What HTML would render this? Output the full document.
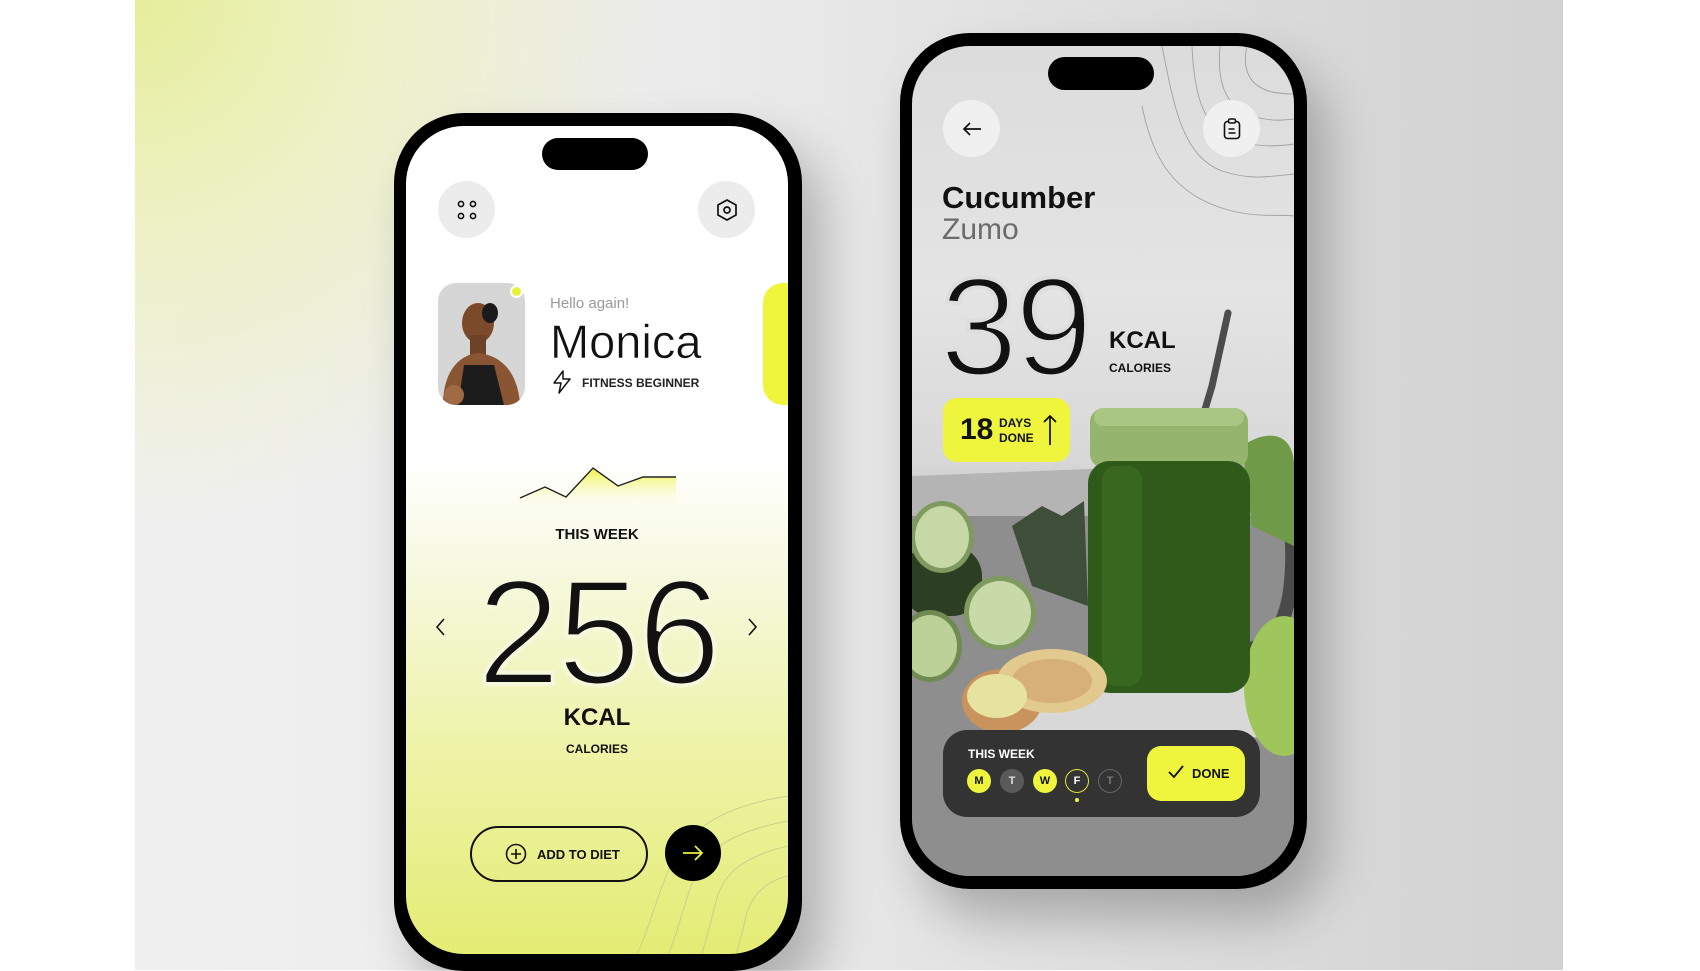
<!DOCTYPE html>
<html><head><meta charset="utf-8">
<style>
*{margin:0;padding:0;box-sizing:border-box}
body{width:1700px;height:970px;overflow:hidden;background:#fff;position:relative;font-family:"Liberation Sans",sans-serif;color:#111}
.a{position:absolute}
#bg{left:135px;top:0;width:1428px;height:970px;background:radial-gradient(ellipse 700px 700px at 0 0,#e6ee9a 0%,#eef1c8 35%,rgba(240,240,240,0) 75%),linear-gradient(90deg,#f0f0f0 0%,#ebebeb 40%,#dcdcdc 75%,#d2d2d2 100%)}
.phone{background:#000;border-radius:70px;box-shadow:20px 30px 50px rgba(0,0,0,.25)}
.scr{overflow:hidden;border-radius:58px}
.circ{border-radius:50%;display:flex;align-items:center;justify-content:center}
.b{font-weight:bold}
</style></head><body>
<div id="bg" class="a"></div>

<!-- LEFT PHONE -->
<div class="a phone" style="left:394px;top:113px;width:408px;height:858px"></div>
<div class="a scr" style="left:406px;top:126px;width:382px;height:828px;background:linear-gradient(180deg,#fff 0%,#fff 40%,#f6f8dc 55%,#eef3a8 75%,#e4ec74 100%)">
  <svg class="a" style="left:200px;top:660px" width="182" height="170" viewBox="0 0 182 170" fill="none" stroke="#c9cf8a" stroke-width="1">
    <path d="M182 10 C120 20 80 40 60 90 C45 130 40 150 30 170"/>
    <path d="M182 35 C130 45 100 60 85 100 C75 130 70 150 62 170"/>
    <path d="M182 60 C140 70 118 85 110 115 C104 140 100 155 95 170"/>
    <path d="M182 90 C160 95 145 110 140 130 C136 150 132 160 130 170"/>
  </svg>
</div>
<div class="a" style="left:542px;top:138px;width:106px;height:32px;background:#000;border-radius:16px"></div>
<div class="a circ" style="left:438px;top:181px;width:57px;height:57px;background:#ececec">
  <svg width="22" height="22" viewBox="0 0 22 22" fill="none" stroke="#111" stroke-width="1.6"><circle cx="5" cy="5" r="2.6"/><circle cx="17" cy="5" r="2.6"/><circle cx="5" cy="17" r="2.6"/><circle cx="17" cy="17" r="2.6"/></svg>
</div>
<div class="a circ" style="left:698px;top:181px;width:57px;height:57px;background:#ececec">
  <svg width="24" height="24" viewBox="0 0 24 24" fill="none" stroke="#111" stroke-width="1.7"><path d="M12 2 L21 7 L21 17 L12 22 L3 17 L3 7 Z"/><circle cx="12" cy="12" r="3"/></svg>
</div>
<!-- avatar -->
<div class="a" style="left:438px;top:283px;width:87px;height:122px;border-radius:18px;background:#d6d6d6;overflow:hidden">
  <svg width="87" height="122" viewBox="0 0 87 122">
    <ellipse cx="40" cy="40" rx="16" ry="20" fill="#7a4a2a"/>
    <ellipse cx="52" cy="30" rx="8" ry="10" fill="#1a1a1a"/>
    <rect x="32" y="52" width="16" height="20" fill="#6e4226"/>
    <path d="M5 122 C5 90 20 72 40 70 C62 72 80 88 82 122 Z" fill="#8a5532"/>
    <path d="M20 122 L26 82 L56 82 L66 122 Z" fill="#1c1c1c"/>
    <ellipse cx="16" cy="112" rx="10" ry="10" fill="#a06a44"/>
  </svg>
</div>
<div class="a" style="left:510px;top:285px;width:13px;height:13px;border-radius:50%;background:#e9f23a;border:2.5px solid #fff"></div>
<div class="a" style="left:550px;top:295px;font-size:15px;color:#9a9a9a">Hello again!</div>
<div class="a" style="left:550px;top:315px;font-size:47px;line-height:54px;color:#111;-webkit-text-stroke:0.6px #fff">Monica</div>
<svg class="a" style="left:552px;top:370px" width="20" height="24" viewBox="0 0 20 24" fill="none" stroke="#111" stroke-width="1.5" stroke-linejoin="round"><path d="M11 1 L2 13 L9 13 L7 23 L18 9 L11 9 Z"/></svg>
<div class="a b" style="left:582px;top:376px;font-size:12px;color:#222">FITNESS BEGINNER</div>
<div class="a" style="left:763px;top:283px;width:25px;height:122px;background:#eef53c;border-radius:20px 0 0 20px"></div>
<!-- chart -->
<svg class="a" style="left:518px;top:460px" width="160" height="50" viewBox="0 0 160 50">
  <defs><linearGradient id="g1" x1="0" y1="0" x2="0" y2="1"><stop offset="0" stop-color="#eef23c"/><stop offset="1" stop-color="#fff" stop-opacity="0"/></linearGradient></defs>
  <path d="M2 38 L27 27 L48 37 L75 8 L100 26 L125 17 L158 17 L158 50 L2 50 Z" fill="url(#g1)"/>
  <path d="M2 38 L27 27 L48 37 L75 8 L100 26 L125 17 L158 17" fill="none" stroke="#222" stroke-width="1.4"/>
</svg>
<div class="a b" style="left:497px;top:526px;width:200px;text-align:center;font-size:15px">THIS WEEK</div>
<div class="a" style="left:430px;top:557px;width:335px;text-align:center;font-size:150px;line-height:150px;letter-spacing:-3px;color:#111;-webkit-text-stroke:4px #f6f8dc;paint-order:normal">256</div>
<svg class="a" style="left:435px;top:617px" width="12" height="20" viewBox="0 0 12 20" fill="none" stroke="#111" stroke-width="1.6"><path d="M9 2 L2 10 L9 18"/></svg>
<svg class="a" style="left:746px;top:617px" width="12" height="20" viewBox="0 0 12 20" fill="none" stroke="#111" stroke-width="1.6"><path d="M3 2 L10 10 L3 18"/></svg>
<div class="a b" style="left:497px;top:704px;width:200px;text-align:center;font-size:24px">KCAL</div>
<div class="a b" style="left:497px;top:742px;width:200px;text-align:center;font-size:12px">CALORIES</div>
<div class="a" style="left:470px;top:826px;width:178px;height:56px;border:2.5px solid #111;border-radius:28px"></div>
<svg class="a" style="left:505px;top:843px" width="22" height="22" viewBox="0 0 22 22" fill="none" stroke="#111" stroke-width="1.6"><circle cx="11" cy="11" r="9.5"/><path d="M11 6v10M6 11h10"/></svg>
<div class="a b" style="left:537px;top:847px;font-size:13px">ADD TO DIET</div>
<div class="a circ" style="left:665px;top:825px;width:56px;height:56px;background:#000">
  <svg width="22" height="16" viewBox="0 0 22 16" fill="none" stroke="#e9f23a" stroke-width="1.8"><path d="M1 8h19M13 1l7 7-7 7"/></svg>
</div>

<!-- RIGHT PHONE -->
<div class="a phone" style="left:900px;top:33px;width:407px;height:856px"></div>
<div class="a scr" style="left:912px;top:46px;width:382px;height:830px;background:linear-gradient(180deg,#dcdcdc 0%,#e4e4e4 30%,#d8d8d8 50%,#bdbdbd 58%,#a8a8a8 70%,#909090 85%,#8a8a8a 100%)">
  <svg class="a" style="left:0;top:0" width="382" height="830" viewBox="0 0 382 830">
    <g fill="none" stroke="#888" stroke-width="0.9" opacity="0.7">
      <path d="M250 0 C262 60 270 110 310 125 C340 135 360 130 382 128"/>
      <path d="M280 0 C282 50 292 85 325 95 C350 102 368 100 382 98"/>
      <path d="M308 0 C305 35 312 60 340 70 C360 76 372 74 382 73"/>
      <path d="M335 0 C330 22 336 40 360 46 C370 48 378 48 382 48"/>
      <path d="M230 60 C240 110 260 150 320 165 C350 172 370 168 382 170"/>
    </g>
    <rect x="0" y="430" width="382" height="400" fill="#8e8e8e"/>
    <path d="M0 430 L382 415 L382 470 L0 470 Z" fill="#b4b4b4"/>
    <path d="M60 640 L330 620 L382 640 L382 690 L80 700 Z" fill="#d8d8d8"/>
    <path d="M330 440 C372 440 382 470 380 520 C378 580 360 600 330 605" fill="none" stroke="#4a4a4a" stroke-width="14"/>
    <ellipse cx="372" cy="640" rx="40" ry="70" fill="#9fc65a"/>
    <path d="M330 400 C360 380 382 390 382 420 L382 500 L340 480 Z" fill="#6f9a48"/>
    <path d="M316 267 L300 340 L288 380" stroke="#4c4c4c" stroke-width="7" fill="none" stroke-linecap="round"/>
    <rect x="178" y="362" width="158" height="60" rx="14" fill="#95b46e"/>
    <rect x="176" y="415" width="162" height="232" rx="22" fill="#2f5a1a"/>
    <rect x="190" y="420" width="40" height="220" rx="14" fill="#3b6b22" opacity=".8"/>
    <rect x="182" y="362" width="150" height="18" rx="9" fill="#a9c782"/>
    <path d="M100 480 L130 460 L150 470 L172 455 L176 560 L120 540 Z" fill="#3e4e38"/>
    <rect x="-10" y="500" width="80" height="70" rx="30" fill="#2c3f22"/>
    <ellipse cx="30" cy="491" rx="32" ry="36" fill="#7f9a5e"/><ellipse cx="30" cy="491" rx="27" ry="31" fill="#c5d8a6"/>
    <ellipse cx="88" cy="567" rx="36" ry="37" fill="#7f9a5e"/><ellipse cx="88" cy="567" rx="31" ry="32" fill="#c8daa8"/>
    <ellipse cx="18" cy="600" rx="32" ry="36" fill="#6f8a52"/><ellipse cx="18" cy="600" rx="27" ry="31" fill="#bcd198"/>
    <ellipse cx="90" cy="655" rx="40" ry="32" fill="#c8935c"/>
    <ellipse cx="140" cy="635" rx="55" ry="32" fill="#e2c98e"/>
    <ellipse cx="140" cy="635" rx="40" ry="22" fill="#d6b078"/>
    <ellipse cx="85" cy="650" rx="30" ry="22" fill="#e6e3a0"/>
  </svg>
</div>
<div class="a" style="left:1048px;top:57px;width:106px;height:33px;background:#000;border-radius:17px"></div>
<div class="a circ" style="left:943px;top:100px;width:57px;height:57px;background:#f0f0f0">
  <svg width="20" height="14" viewBox="0 0 20 14" fill="none" stroke="#111" stroke-width="1.7"><path d="M19 7H2M8 1L2 7l6 6"/></svg>
</div>
<div class="a circ" style="left:1203px;top:100px;width:57px;height:57px;background:#f0f0f0">
  <svg width="18" height="22" viewBox="0 0 18 22" fill="none" stroke="#111" stroke-width="1.6"><rect x="1.5" y="3.5" width="15" height="17" rx="3"/><rect x="5.5" y="1" width="7" height="4" rx="1.5" fill="#f0f0f0"/><path d="M5.5 11h6M5.5 15h7"/></svg>
</div>
<div class="a b" style="left:942px;top:180px;font-size:31px;line-height:36px">Cucumber</div>
<div class="a" style="left:942px;top:212px;font-size:30px;line-height:36px;color:#6b6b6b">Zumo</div>
<div class="a" style="left:940px;top:252px;font-size:140px;line-height:150px;letter-spacing:-3px;-webkit-text-stroke:4px #dedede">39</div>
<div class="a b" style="left:1109px;top:327px;font-size:24px">KCAL</div>
<div class="a b" style="left:1109px;top:361px;font-size:12px">CALORIES</div>
<div class="a" style="left:943px;top:398px;width:127px;height:64px;border-radius:14px;background:#eef53c"></div>
<div class="a b" style="left:960px;top:412px;font-size:30px;line-height:36px">18</div>
<div class="a b" style="left:999px;top:416px;font-size:12px;line-height:15px">DAYS<br>DONE</div>
<svg class="a" style="left:1043px;top:414px" width="14" height="32" viewBox="0 0 14 32" fill="none" stroke="#111" stroke-width="1.7"><path d="M7 31V2M1 8l6-6 6 6"/></svg>
<div class="a" style="left:943px;top:730px;width:317px;height:87px;border-radius:24px;background:#333"></div>
<div class="a b" style="left:968px;top:747px;font-size:12px;color:#fff">THIS WEEK</div>
<div class="a circ b" style="left:967px;top:769px;width:24px;height:24px;background:#eef53c;font-size:11px">M</div>
<div class="a circ b" style="left:1000px;top:769px;width:24px;height:24px;background:#5a5a5a;font-size:11px;color:#ddd">T</div>
<div class="a circ b" style="left:1033px;top:769px;width:24px;height:24px;background:#eef53c;font-size:11px">W</div>
<div class="a circ b" style="left:1065px;top:769px;width:24px;height:24px;border:1.5px solid #dde43a;font-size:11px;color:#fff">F</div>
<div class="a" style="left:1075px;top:798px;width:4px;height:4px;border-radius:50%;background:#eef53c"></div>
<div class="a circ b" style="left:1098px;top:769px;width:24px;height:24px;border:1.5px solid #666;font-size:11px;color:#777">T</div>
<div class="a" style="left:1147px;top:746px;width:98px;height:55px;border-radius:14px;background:#eef53c"></div>
<svg class="a" style="left:1168px;top:765px" width="16" height="14" viewBox="0 0 16 14" fill="none" stroke="#111" stroke-width="1.8"><path d="M1 7l5 5 9-11"/></svg>
<div class="a b" style="left:1192px;top:766px;font-size:13px">DONE</div>
</body></html>
